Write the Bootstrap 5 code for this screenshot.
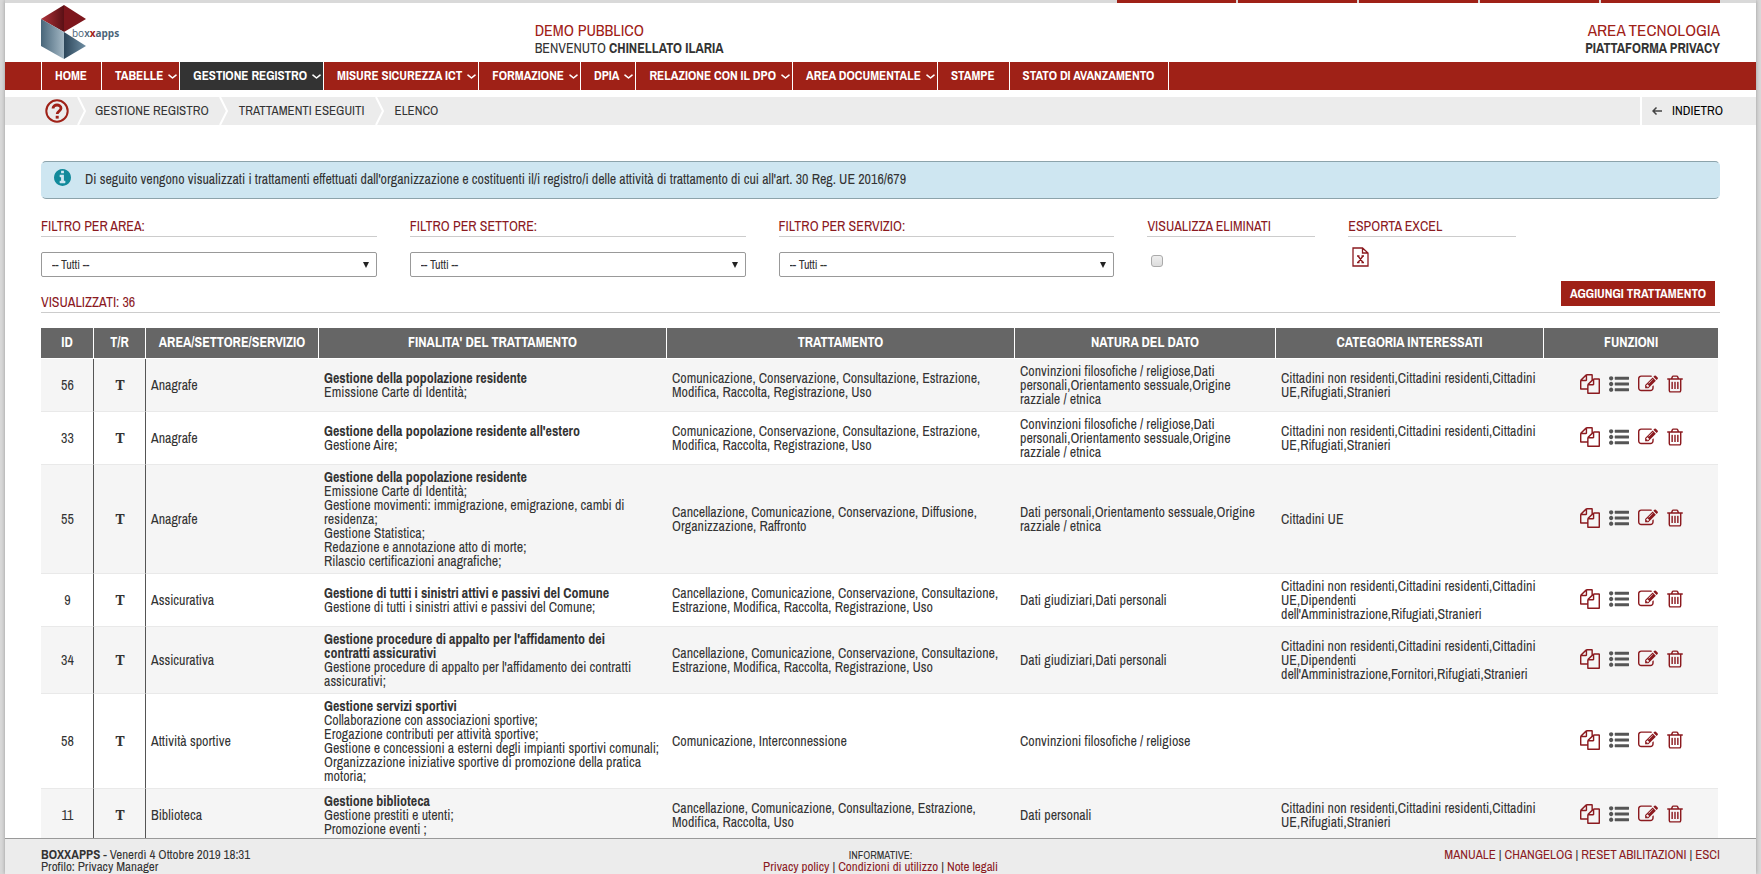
<!DOCTYPE html>
<html lang="it">
<head>
<meta charset="utf-8">
<meta name="viewport" content="width=device-width, initial-scale=1">
<title>Boxxapps - Trattamenti eseguiti</title>
<link href="https://cdn.jsdelivr.net/npm/bootstrap@5.3.0/dist/css/bootstrap.min.css" rel="stylesheet">
<style>
:root { --brand: #9f2117; --wine: #8b1a1f; --ink: #333; --head: #666; --bar: #ececec; }
body { background: #d9d9d9; color: var(--ink); font-family: "Liberation Sans Narrow", "Archivo Narrow", "Arial Narrow", "Liberation Sans", sans-serif; font-size: 14px; line-height: 14px; }
a { color: var(--wine); text-decoration: none; }
.page { margin: 0 5px; background: #fff; box-shadow: 0 0 4px #999; }
.side-pad { padding-left: 36px; padding-right: 36px; }
.top-strip { height: 3px; background: #d9d9d9; gap: 2px; }
.top-strip span { width: 119px; background: var(--brand); }
.masthead { height: 59px; }
.logo-box { flex: 0 0 29.4%; padding-top: 2px; }
.who { font-size: 16px; line-height: 18px; padding-top: 18px; }
.who .lower { font-size: 14px; }
.who .upper { color: var(--brand); }
.who .area { font-size: 17px; }
.menu { background: var(--brand); height: 28px; }
.menu > a { color: #fff; font-size: 13px; font-weight: 700; padding: 0 14px 0 13px; border-right: 1px solid #fff; white-space: nowrap; }
.menu > a:first-child { border-left: 1px solid #fff; }
.menu > a.has-sub { padding-right: 2px; gap: 5px; }
.menu > a.active { background: var(--ink); }
.crumbs { margin-top: 7px; height: 28px; background: var(--bar); font-size: 13px; }
.crumbs a { color: var(--ink); }
.crumbs .sep { margin: 0 10px; }
.back-link { border-left: 2px solid #fff; padding: 0 33px 0 10px; gap: 10px; }
.notice { margin-top: 36px; height: 38px; background: #cee6f1; border: 1px solid #cee6f1; border-top-color: #8ca3ab; border-bottom-color: #8ca3ab; border-radius: 5px; padding: 0 12px 2px 12px; gap: 14px; }
.filters { margin-top: 20px; gap: 33px; }
.filters .wide { flex: 0 0 20%; }
.filters .slim { flex: 0 0 10%; }
.cap { display: block; color: var(--wine); border-bottom: 1px solid #ccc; height: 18px; line-height: 14px; white-space: nowrap; }
.pick { display: block; width: 100%; height: 25px; margin-top: 15px; padding: 0 10px; border: 1px solid #999; border-radius: 2px; font-size: 12px; color: var(--ink); appearance: none; background: #fff url("data:image/svg+xml,%3Csvg xmlns='http://www.w3.org/2000/svg' width='6' height='6'%3E%3Cpath d='M0 0h6L3 6z' fill='%23222'/%3E%3C/svg%3E") no-repeat right 7px center; }
.tick { display: block; appearance: none; width: 12px; height: 12px; margin: 18px 0 0 4px; border: 1px solid #aaa; border-radius: 3px; background: linear-gradient(#eee, #ddd); }
.export { display: block; margin: 10px 0 0 4px; height: 20px; }
.export svg { display: block; }
.summary { margin-top: 4px; height: 32px; border-bottom: 1px solid #ccc; color: var(--wine); }
.summary .count { padding-bottom: 3px; }
.add-btn { background: var(--brand); color: #fff; border: 0; border-radius: 0; font-size: 13px; line-height: 13px; height: 25px; width: 154px; padding: 0; font-weight: 700; margin: 0 5px 6px 0; white-space: nowrap; }
.add-btn:hover { background: #7f1a12; color: #fff; }
.grid { margin-top: 15px; width: calc(100% - 2px); table-layout: fixed; border-collapse: separate; border-spacing: 0; }
.grid th { background: var(--head); color: #fff; text-align: center; height: 31px; padding: 0 0 2px; border-right: 1px solid #fff; border-bottom: 1px solid #fff; white-space: nowrap; }
.grid th:last-child { border-right: 0; }
.grid td { padding: 5px 4px 5px 5px; border-bottom: 1px solid #e9e9e9; vertical-align: middle; }
.grid tbody tr:nth-child(odd) { background: #f5f5f5; }
.grid td:nth-child(-n+2) { text-align: center; border-right: 1px solid #555; }
.grid td:nth-child(2) { font-family: "Noto Serif", "DejaVu Serif", "Liberation Serif", serif; font-weight: 700; font-size: 14px; }
.grid td b { display: block; padding-right: 16px; }
.c-id { width: 53px; } .c-tr { width: 52px; } .c-area { width: 173px; }
.c-nat { width: 261px; } .c-cat { width: 268px; } .c-fun { width: 174px; }
.tools { gap: 9px; padding-bottom: 2px; }
.tools a, .tools svg { display: block; }
.tools a { color: var(--wine); }
.tools a.details { color: #555; }
.scroller { min-height: 0; overflow-y: auto; scrollbar-width: none; }
.scroller::-webkit-scrollbar { display: none; }
.foot { height: 36px; background: var(--bar); border-top: 1px solid #999; font-size: 13px; line-height: 12px; padding-top: 10px; }
.foot .tiny { font-size: 11px; }
</style>
</head>
<body>
<svg class="d-none" aria-hidden="true">
  <symbol id="i-copy" viewBox="0 0 1792 1792"><path fill="currentColor" d="M1696 384q40 0 68 28t28 68v1216q0 40-28 68t-68 28h-960q-40 0-68-28t-28-68v-288h-544q-40 0-68-28t-28-68v-672q0-40 20-88t48-76l408-408q28-28 76-48t88-20h416q40 0 68 28t28 68v328q68-40 128-40h416zm-544 213l-299 299h299v-299zm-640-384l-299 299h299v-299zm196 647l316-316v-416h-384v416q0 40-28 68t-68 28h-416v640h512v-256q0-40 20-88t48-76zm956 804v-1152h-384v416q0 40-28 68t-68 28h-416v640h896z"/></symbol>
  <symbol id="i-list" viewBox="0 0 1792 1792"><path fill="currentColor" d="M384 1408q0 80-56 136t-136 56-136-56-56-136 56-136 136-56 136 56 56 136zm0-512q0 80-56 136t-136 56-136-56-56-136 56-136 136-56 136 56 56 136zm1408 416v192q0 13-9.500 22.500t-22.500 9.500h-1216q-13 0-22.500-9.500t-9.500-22.500v-192q0-13 9.500-22.500t22.500-9.500h1216q13 0 22.500 9.500t9.500 22.500zm-1408-928q0 80-56 136t-136 56-136-56-56-136 56-136 136-56 136 56 56 136zm1408 416v192q0 13-9.500 22.500t-22.500 9.500h-1216q-13 0-22.500-9.500t-9.500-22.500v-192q0-13 9.500-22.500t22.500-9.500h1216q13 0 22.500 9.500t9.500 22.500zm0-512v192q0 13-9.500 22.500t-22.500 9.500h-1216q-13 0-22.500-9.500t-9.500-22.500v-192q0-13 9.500-22.500t22.500-9.500h1216q13 0 22.500 9.500t9.500 22.500z"/></symbol>
  <symbol id="i-edit" viewBox="0 0 1792 1792"><path fill="currentColor" d="M888 1184l116-116-152-152-116 116v56h96v96h56zm440-720q-16-16-33 1l-350 350q-17 17-1 33t33-1l350-350q17-17 1-33zm80 594v190q0 119-84.500 203.500t-203.500 84.500h-832q-119 0-203.500-84.500t-84.500-203.500v-832q0-119 84.500-203.500t203.500-84.500h832q63 0 117 25 15 7 18 23 3 17-9 29l-49 49q-14 14-32 8-23-6-45-6h-832q-66 0-113 47t-47 113v832q0 66 47 113t113 47h832q66 0 113-47t47-113v-126q0-13 9-22l64-64q15-15 35-7t20 29zm-96-738l288 288-672 672h-288v-288zm444 132l-92 92-288-288 92-92q28-28 68-28t68 28l152 152q28 28 28 68t-28 68z"/></symbol>
  <symbol id="i-trash" viewBox="192 0 1408 1792"><path fill="currentColor" d="M704 736v576q0 14-9 23t-23 9h-64q-14 0-23-9t-9-23v-576q0-14 9-23t23-9h64q14 0 23 9t9 23zm256 0v576q0 14-9 23t-23 9h-64q-14 0-23-9t-9-23v-576q0-14 9-23t23-9h64q14 0 23 9t9 23zm256 0v576q0 14-9 23t-23 9h-64q-14 0-23-9t-9-23v-576q0-14 9-23t23-9h64q14 0 23 9t9 23zm128 724v-948h-896v948q0 22 7 40.500t14.500 27 10.500 8.500h832q3 0 10.500-8.500t14.500-27 7-40.500zm-672-1076h448l-48-117q-7-9-17-11h-317q-10 2-17 11zm928 32v64q0 14-9 23t-23 9h-96v948q0 83-47 143.500t-113 60.500h-832q-66 0-113-58.500t-47-141.500v-952h-96q-14 0-23-9t-9-23v-64q0-14 9-23t23-9h309l70-167q15-37 54-63t79-26h320q40 0 79 26t54 63l70 167h309q14 0 23 9t9 23z"/></symbol>
  <symbol id="i-info" viewBox="128 128 1536 1536"><path fill="currentColor" d="M1152 1376v-160q0-14-9-23t-23-9h-96v-512q0-14-9-23t-23-9h-320q-14 0-23 9t-9 23v160q0 14 9 23t23 9h96v320h-96q-14 0-23 9t-9 23v160q0 14 9 23t23 9h448q14 0 23-9t9-23zm-128-896v-160q0-14-9-23t-23-9h-192q-14 0-23 9t-9 23v160q0 14 9 23t23 9h192q14 0 23-9t9-23zm640 416q0 209-103 385.500t-279.500 279.500-385.500 103-385.500-103-279.500-279.500-103-385.500 103-385.500 279.500-279.500 385.500-103 385.500 103 279.500 279.500 103 385.500z"/></symbol>
  <symbol id="i-down" viewBox="0 0 9 5"><path d="M1 1.200L4.500 4L8 1.200" fill="none" stroke="currentColor" stroke-width="1.600" stroke-linecap="round" stroke-linejoin="round"/></symbol>
  <symbol id="i-sep" viewBox="0 0 10 28"><path d="M1 0L8 14L1 28" fill="none" stroke="#fff" stroke-width="2"/></symbol>
</svg>

<div class="page vh-100 d-flex flex-column">
  <header class="flex-shrink-0">
    <div class="top-strip side-pad d-flex justify-content-end"><span></span><span></span><span></span><span></span><span></span></div>
    <div class="masthead side-pad d-flex">
      <div class="logo-box">
        <svg width="84" height="56" viewBox="0 0 84 56" role="img" aria-label="boxxapps">
          <defs>
            <linearGradient id="g1"><stop offset="0" stop-color="#b0333a"/><stop offset="1" stop-color="#5a1015"/></linearGradient>
            <linearGradient id="g2"><stop offset="0" stop-color="#48667a"/><stop offset="1" stop-color="#a3b7c4"/></linearGradient>
            <linearGradient id="g3"><stop offset="0" stop-color="#2c465a"/><stop offset="1" stop-color="#6f8ea3"/></linearGradient>
          </defs>
          <path d="M23 0L0 14l23 13z" fill="url(#g1)"/><path d="M23 0l22 14-22 13z" fill="#7d161c"/>
          <path d="M0 14l23 13v27L0 41z" fill="url(#g2)"/><path d="M23 27l22 14-22 13z" fill="url(#g3)"/>
          <text x="31" y="32" font-family="Open Sans, sans-serif" font-size="10" fill="#4a6478">bo<tspan font-weight="600">x</tspan><tspan fill="#9f2117" font-weight="700">x</tspan><tspan font-weight="700">apps</tspan></text>
        </svg>
      </div>
      <div class="who flex-grow-1"><div class="upper">DEMO PUBBLICO</div><div class="lower">BENVENUTO <b>CHINELLATO ILARIA</b></div></div>
      <div class="who text-end"><div class="upper area">AREA TECNOLOGIA</div><div class="lower"><b>PIATTAFORMA PRIVACY</b></div></div>
    </div>
    <nav class="menu side-pad d-flex align-items-stretch" aria-label="Principale">
      <a class="d-flex align-items-center" href="#">HOME</a>
      <a class="d-flex align-items-center has-sub" href="#">TABELLE <svg width="9" height="5"><use href="#i-down"/></svg></a>
      <a class="d-flex align-items-center has-sub active" href="#">GESTIONE REGISTRO <svg width="9" height="5"><use href="#i-down"/></svg></a>
      <a class="d-flex align-items-center has-sub" href="#">MISURE SICUREZZA ICT <svg width="9" height="5"><use href="#i-down"/></svg></a>
      <a class="d-flex align-items-center has-sub" href="#">FORMAZIONE <svg width="9" height="5"><use href="#i-down"/></svg></a>
      <a class="d-flex align-items-center has-sub" href="#">DPIA <svg width="9" height="5"><use href="#i-down"/></svg></a>
      <a class="d-flex align-items-center has-sub" href="#">RELAZIONE CON IL DPO <svg width="9" height="5"><use href="#i-down"/></svg></a>
      <a class="d-flex align-items-center has-sub" href="#">AREA DOCUMENTALE <svg width="9" height="5"><use href="#i-down"/></svg></a>
      <a class="d-flex align-items-center" href="#">STAMPE</a>
      <a class="d-flex align-items-center" href="#">STATO DI AVANZAMENTO</a>
    </nav>
    <div class="crumbs d-flex align-items-stretch">
      <nav class="d-flex align-items-center flex-grow-1 ps-4" aria-label="Percorso">
        <a class="ms-3" href="#" aria-label="Aiuto"><svg class="d-block" width="24" height="24" viewBox="0 0 24 24" fill="none" stroke="#9f2117"><circle cx="12" cy="12" r="10.700" stroke-width="2"/><path d="M8 9.500C8 4.800 16 4.900 16 9.300C16 12.200 12.200 12 12.200 15" stroke-width="2.800"/><path d="M12.200 16.800v2.800" stroke-width="3"/></svg></a>
        <svg class="ms-2 me-2" width="10" height="28"><use href="#i-sep"/></svg>
        <a href="#">GESTIONE REGISTRO</a>
        <svg class="sep" width="10" height="28"><use href="#i-sep"/></svg>
        <a href="#">TRATTAMENTI ESEGUITI</a>
        <svg class="sep" width="10" height="28"><use href="#i-sep"/></svg>
        <a href="#">ELENCO</a>
      </nav>
      <a class="back-link d-flex align-items-center text-black" href="#"><svg width="10" height="8" viewBox="0 0 10 8" fill="none" stroke="#444" stroke-width="1.500"><path d="M10 4H1M4.500 .5L1 4l3.500 3.500"/></svg> INDIETRO</a>
    </div>
  </header>

  <main class="scroller flex-grow-1 side-pad">
    <div class="notice d-flex align-items-center" role="status"><svg class="flex-shrink-0 mb-1" width="17" height="17" color="#128a9b"><use href="#i-info"/></svg><span>Di seguito vengono visualizzati i trattamenti effettuati dall'organizzazione e costituenti il/i registro/i delle attività di trattamento di cui all'art. 30 Reg. UE 2016/679</span></div>

    <form class="filters d-flex">
      <div class="wide"><label class="cap" for="f-area">FILTRO PER AREA:</label><select class="pick" id="f-area"><option>-- Tutti --</option></select></div>
      <div class="wide"><label class="cap" for="f-settore">FILTRO PER SETTORE:</label><select class="pick" id="f-settore"><option>-- Tutti --</option></select></div>
      <div class="wide"><label class="cap" for="f-servizio">FILTRO PER SERVIZIO:</label><select class="pick" id="f-servizio"><option>-- Tutti --</option></select></div>
      <div class="slim"><label class="cap" for="f-del">VISUALIZZA ELIMINATI</label><input class="tick" type="checkbox" id="f-del"></div>
      <div class="slim"><span class="cap">ESPORTA EXCEL</span><a class="export" href="#" aria-label="Esporta Excel"><svg width="17" height="20" viewBox="0 0 17 20" fill="none" stroke="#8b1a1f" stroke-width="1.300"><path d="M1 1h9.500L16 6v13H1zM10.500 1v5H16"/><path d="M5 9h2.500M9.500 9H12M5 15.500h2.500M9.500 15.500H12M6 9l5 6.500M11 9l-5 6.500"/></svg></a></div>
    </form>

    <div class="summary d-flex justify-content-between align-items-end"><span class="count">VISUALIZZATI: 36</span><button class="btn add-btn" type="button">AGGIUNGI TRATTAMENTO</button></div>

    <table class="grid">
      <colgroup><col class="c-id"><col class="c-tr"><col class="c-area"><col><col><col class="c-nat"><col class="c-cat"><col class="c-fun"></colgroup>
      <thead><tr><th>ID</th><th>T/R</th><th>AREA/SETTORE/SERVIZIO</th><th>FINALITA' DEL TRATTAMENTO</th><th>TRATTAMENTO</th><th>NATURA DEL DATO</th><th>CATEGORIA INTERESSATI</th><th>FUNZIONI</th></tr></thead>
      <tbody>
        <tr><td>56</td><td>T</td><td>Anagrafe</td><td><b>Gestione della popolazione residente</b>Emissione Carte di Identità;</td><td>Comunicazione, Conservazione, Consultazione, Estrazione, Modifica, Raccolta, Registrazione, Uso</td><td>Convinzioni filosofiche / religiose,Dati personali,Orientamento sessuale,Origine razziale / etnica</td><td>Cittadini non residenti,Cittadini residenti,Cittadini UE,Rifugiati,Stranieri</td><td><div class="tools d-flex justify-content-center"><a href="#" aria-label="Copia"><svg width="20" height="20"><use href="#i-copy"/></svg></a><a class="details" href="#" aria-label="Dettagli"><svg width="20" height="20"><use href="#i-list"/></svg></a><a href="#" aria-label="Modifica"><svg width="20" height="20"><use href="#i-edit"/></svg></a><a href="#" aria-label="Elimina"><svg width="16" height="20"><use href="#i-trash"/></svg></a></div></td></tr>
        <tr><td>33</td><td>T</td><td>Anagrafe</td><td><b>Gestione della popolazione residente all'estero</b>Gestione Aire;</td><td>Comunicazione, Conservazione, Consultazione, Estrazione, Modifica, Raccolta, Registrazione, Uso</td><td>Convinzioni filosofiche / religiose,Dati personali,Orientamento sessuale,Origine razziale / etnica</td><td>Cittadini non residenti,Cittadini residenti,Cittadini UE,Rifugiati,Stranieri</td><td><div class="tools d-flex justify-content-center"><a href="#" aria-label="Copia"><svg width="20" height="20"><use href="#i-copy"/></svg></a><a class="details" href="#" aria-label="Dettagli"><svg width="20" height="20"><use href="#i-list"/></svg></a><a href="#" aria-label="Modifica"><svg width="20" height="20"><use href="#i-edit"/></svg></a><a href="#" aria-label="Elimina"><svg width="16" height="20"><use href="#i-trash"/></svg></a></div></td></tr>
        <tr><td>55</td><td>T</td><td>Anagrafe</td><td><b>Gestione della popolazione residente</b>Emissione Carte di Identità;<br>Gestione movimenti: immigrazione, emigrazione, cambi di residenza;<br>Gestione Statistica;<br>Redazione e annotazione atto di morte;<br>Rilascio certificazioni anagrafiche;</td><td>Cancellazione, Comunicazione, Conservazione, Diffusione, Organizzazione, Raffronto</td><td>Dati personali,Orientamento sessuale,Origine razziale / etnica</td><td>Cittadini UE</td><td><div class="tools d-flex justify-content-center"><a href="#" aria-label="Copia"><svg width="20" height="20"><use href="#i-copy"/></svg></a><a class="details" href="#" aria-label="Dettagli"><svg width="20" height="20"><use href="#i-list"/></svg></a><a href="#" aria-label="Modifica"><svg width="20" height="20"><use href="#i-edit"/></svg></a><a href="#" aria-label="Elimina"><svg width="16" height="20"><use href="#i-trash"/></svg></a></div></td></tr>
        <tr><td>9</td><td>T</td><td>Assicurativa</td><td><b>Gestione di tutti i sinistri attivi e passivi del Comune</b>Gestione di tutti i sinistri attivi e passivi del Comune;</td><td>Cancellazione, Comunicazione, Conservazione, Consultazione, Estrazione, Modifica, Raccolta, Registrazione, Uso</td><td>Dati giudiziari,Dati personali</td><td>Cittadini non residenti,Cittadini residenti,Cittadini UE,Dipendenti dell'Amministrazione,Rifugiati,Stranieri</td><td><div class="tools d-flex justify-content-center"><a href="#" aria-label="Copia"><svg width="20" height="20"><use href="#i-copy"/></svg></a><a class="details" href="#" aria-label="Dettagli"><svg width="20" height="20"><use href="#i-list"/></svg></a><a href="#" aria-label="Modifica"><svg width="20" height="20"><use href="#i-edit"/></svg></a><a href="#" aria-label="Elimina"><svg width="16" height="20"><use href="#i-trash"/></svg></a></div></td></tr>
        <tr><td>34</td><td>T</td><td>Assicurativa</td><td><b>Gestione procedure di appalto per l'affidamento dei contratti assicurativi</b>Gestione procedure di appalto per l'affidamento dei contratti assicurativi;</td><td>Cancellazione, Comunicazione, Conservazione, Consultazione, Estrazione, Modifica, Raccolta, Registrazione, Uso</td><td>Dati giudiziari,Dati personali</td><td>Cittadini non residenti,Cittadini residenti,Cittadini UE,Dipendenti dell'Amministrazione,Fornitori,Rifugiati,Stranieri</td><td><div class="tools d-flex justify-content-center"><a href="#" aria-label="Copia"><svg width="20" height="20"><use href="#i-copy"/></svg></a><a class="details" href="#" aria-label="Dettagli"><svg width="20" height="20"><use href="#i-list"/></svg></a><a href="#" aria-label="Modifica"><svg width="20" height="20"><use href="#i-edit"/></svg></a><a href="#" aria-label="Elimina"><svg width="16" height="20"><use href="#i-trash"/></svg></a></div></td></tr>
        <tr><td>58</td><td>T</td><td>Attività sportive</td><td><b>Gestione servizi sportivi</b>Collaborazione con associazioni sportive;<br>Erogazione contributi per attività sportive;<br>Gestione e concessioni a esterni degli impianti sportivi comunali;<br>Organizzazione iniziative sportive di promozione della pratica motoria;</td><td>Comunicazione, Interconnessione</td><td>Convinzioni filosofiche / religiose</td><td></td><td><div class="tools d-flex justify-content-center"><a href="#" aria-label="Copia"><svg width="20" height="20"><use href="#i-copy"/></svg></a><a class="details" href="#" aria-label="Dettagli"><svg width="20" height="20"><use href="#i-list"/></svg></a><a href="#" aria-label="Modifica"><svg width="20" height="20"><use href="#i-edit"/></svg></a><a href="#" aria-label="Elimina"><svg width="16" height="20"><use href="#i-trash"/></svg></a></div></td></tr>
        <tr><td>11</td><td>T</td><td>Biblioteca</td><td><b>Gestione biblioteca</b>Gestione prestiti e utenti;<br>Promozione eventi ;</td><td>Cancellazione, Comunicazione, Consultazione, Estrazione, Modifica, Raccolta, Uso</td><td>Dati personali</td><td>Cittadini non residenti,Cittadini residenti,Cittadini UE,Rifugiati,Stranieri</td><td><div class="tools d-flex justify-content-center"><a href="#" aria-label="Copia"><svg width="20" height="20"><use href="#i-copy"/></svg></a><a class="details" href="#" aria-label="Dettagli"><svg width="20" height="20"><use href="#i-list"/></svg></a><a href="#" aria-label="Modifica"><svg width="20" height="20"><use href="#i-edit"/></svg></a><a href="#" aria-label="Elimina"><svg width="16" height="20"><use href="#i-trash"/></svg></a></div></td></tr>
      </tbody>
    </table>
  </main>

  <footer class="foot side-pad d-flex flex-shrink-0">
    <div class="col"><b>BOXXAPPS</b> - Venerdì 4 Ottobre 2019 18:31<br>Profilo: Privacy Manager</div>
    <div class="col text-center"><div class="tiny">INFORMATIVE:</div><a href="#">Privacy policy</a> | <a href="#">Condizioni di utilizzo</a> | <a href="#">Note legali</a></div>
    <div class="col text-end"><a href="#">MANUALE</a> | <a href="#">CHANGELOG</a> | <a href="#">RESET ABILITAZIONI</a> | <a href="#">ESCI</a></div>
  </footer>
</div>
<script src="https://cdn.jsdelivr.net/npm/bootstrap@5.3.0/dist/js/bootstrap.bundle.min.js"></script>
</body>
</html>
